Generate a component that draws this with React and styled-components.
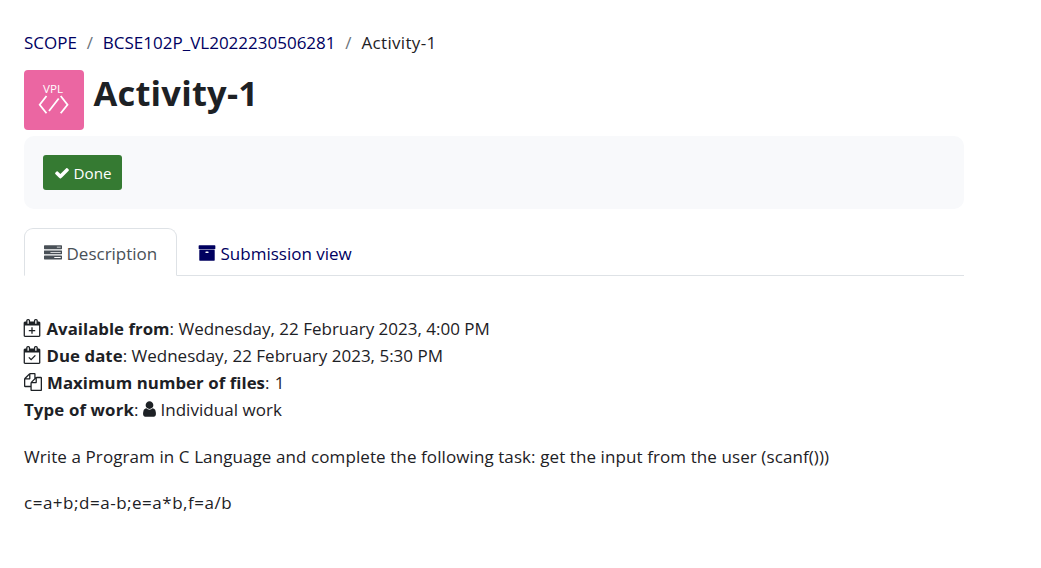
import React from "react";
import styled, { createGlobalStyle } from "styled-components";

const GlobalStyle = createGlobalStyle`
  * { box-sizing: border-box; }
  body {
    margin: 0;
    background: #fff;
    color: #1d2125;
    font-family: "Segoe UI", "Open Sans", "Noto Sans", sans-serif;
    font-size: 17px;
    line-height: 27px;
  }
`;

const Page = styled.main`
  width: 964px;
  padding: 29px 0 0 24px;
`;

const Text = styled.span`
  letter-spacing: ${(p) => p.$track || 0}px;
  white-space: pre;
`;

const Breadcrumb = styled.nav`
  display: flex;
  height: 27px;
`;

const Crumb = styled(Text)`
  color: ${(p) => (p.$link ? "#00005f" : "#1d2125")};
`;

const Separator = styled.span`
  padding: 0 10px 0 9.7px;
  color: #6a737b;
`;

const Header = styled.header`
  display: flex;
  margin-top: 14px;
`;

const ActivityIcon = styled.div`
  width: 60px;
  height: 60px;
  border-radius: 4px;
  background: #eb66a2;
`;

const Title = styled.h1`
  margin: 0 0 0 9.5px;
  font-size: 34.5px;
  line-height: 46px;
  font-weight: 700;
  letter-spacing: 0.2px;
`;

const Panel = styled.section`
  height: 73px;
  margin-top: 6px;
  padding: 19px;
  border-radius: 10px;
  background: #f8f9fb;
`;

const DoneBadge = styled.div`
  display: inline-flex;
  align-items: center;
  gap: 4px;
  width: 79px;
  height: 35px;
  padding: 1px 0 0 10.5px;
  border-radius: 3px;
  background: #357a32;
  color: #fff;
  font-size: 15.2px;
`;

const Tabs = styled.nav`
  display: flex;
  height: 48px;
  margin-top: 19px;
  border-bottom: 1px solid #dee2e6;
`;

const Tab = styled.div`
  display: flex;
  align-items: center;
  height: 48px;
  gap: 5px;
  width: ${(p) => p.$width}px;
  padding: 2px 0 0 ${(p) => (p.$active ? 18.5 : 19.5)}px;
  border: 1px solid ${(p) => (p.$active ? "#dee2e6" : "transparent")};
  border-bottom-color: ${(p) => (p.$active ? "#fff" : "transparent")};
  border-radius: 9px 9px 0 0;
  color: ${(p) => (p.$active ? "#495057" : "#00005f")};
`;

const Details = styled.section`
  margin-top: 39px;
`;

const Row = styled.div`
  display: flex;
  align-items: center;
  height: 27px;
`;

const IconSlot = styled.span`
  display: flex;
  margin: 0 ${(p) => p.$after}px 1px ${(p) => p.$before}px;
`;

const Bold = styled(Text)`
  font-size: 16.8px;
  font-weight: 700;
`;

const Paragraph = styled.p`
  margin: ${(p) => p.$top}px 0 0;
`;

const icons = {
  check:
    "M1671 566q0 40-28 68l-724 724-136 136q-28 28-68 28t-68-28l-136-136-362-362q-28-28-28-68t28-68l136-136q28-28 68-28t68 28l294 295 656-657q28-28 68-28t68 28l136 136q28 28 28 68z",
  tasks:
    "M1024 1384h640v-80h-640v80zm-384-512h1024v-80h-1024v80zm640-512h384v-80h-384v80zm512 856v256q0 26-19 45t-45 19h-1664q-26 0-45-19t-19-45v-256q0-26 19-45t45-19h1664q26 0 45 19t19 45zm0-512v256q0 26-19 45t-45 19h-1664q-26 0-45-19t-19-45v-256q0-26 19-45t45-19h1664q26 0 45 19t19 45zm0-512v256q0 26-19 45t-45 19h-1664q-26 0-45-19t-19-45v-256q0-26 19-45t45-19h1664q26 0 45 19t19 45z",
  archive:
    "M1058 822q0-26-19-45t-45-19h-196q-26 0-45 19t-19 45 19 45 45 19h196q26 0 45-19t19-45zm606-182v960q0 26-19 45t-45 19h-1408q-26 0-45-19t-19-45v-960q0-26 19-45t45-19h1408q26 0 45 19t19 45zm64-448v256q0 26-19 45t-45 19h-1536q-26 0-45-19t-19-45v-256q0-26 19-45t45-19h1536q26 0 45 19t19 45z",
  calendar:
    "M192 1664h1408v-1024h-1408v1024zm384-1216v-288q0-14-9-23t-23-9h-64q-14 0-23 9t-9 23v288q0 14 9 23t23 9h64q14 0 23-9t9-23zm768 0v-288q0-14-9-23t-23-9h-64q-14 0-23 9t-9 23v288q0 14 9 23t23 9h64q14 0 23-9t9-23zm384-64v1280q0 52-38 90t-90 38h-1408q-52 0-90-38t-38-90v-1280q0-52 38-90t90-38h128v-96q0-66 47-113t113-47h64q66 0 113 47t47 113v96h384v-96q0-66 47-113t113-47h64q66 0 113 47t47 113v96h128q52 0 90 38t38 90z",
  plus: "M832 832h128v256h256v128h-256v256h-128v-256h-256v-128h256z",
  tick: "M810 1450l-275-275 92-92 183 183 375-375 92 92z",
  files:
    "M1696 384q40 0 68 28t28 68v1216q0 40-28 68t-68 28h-960q-40 0-68-28t-28-68v-288h-544q-40 0-68-28t-28-68v-672q0-40 20-88t48-76l408-408q28-28 76-48t88-20h416q40 0 68 28t28 68v328q68-40 128-40h416zm-544 213l-299 299h299v-299zm-640-384l-299 299h299v-299zm196 647l316-316v-416h-384v416q0 40-28 68t-68 28h-416v640h512v-256q0-40 20-88t48-76zm956 804v-1152h-384v416q0 40-28 68t-68 28h-416v640h896z",
  user: "M1536 1399q0 109-62.5 187t-150.5 78h-854q-88 0-150.5-78t-62.5-187q0-85 8.5-160.5t31.5-152 58.5-131 94-89 134.5-34.5q131 128 313 128t313-128q76 0 134.5 34.5t94 89 58.5 131 31.5 152 8.5 160.5zm-256-887q0 159-112.5 271.5t-271.5 112.5-271.5-112.5-112.5-271.5 112.5-271.5 271.5-112.5 271.5 112.5 112.5 271.5z",
};

function Icon({ names, size = 18, box = "0 0 1792 1792", width = size }) {
  return (
    <svg width={width} height={size} viewBox={box} fill="currentColor">
      {names.map((n) => (
        <path key={n} d={icons[n]} />
      ))}
    </svg>
  );
}

const LogoLabel = styled.text`
  font-size: 10.5px;
`;

function VplLogo() {
  return (
    <svg width="60" height="60" viewBox="0 0 60 60">
      <LogoLabel x="19" y="23" fill="#fff" textLength="20" lengthAdjust="spacingAndGlyphs">
        VPL
      </LogoLabel>
      <path
        d="M22.5 26L15.7 34.7L22.5 43.3M36.7 26L43.5 34.7L36.7 43.3M34.7 28.5L25 41"
        fill="none"
        stroke="#fff"
        strokeWidth="1.8"
      />
    </svg>
  );
}

export default function App() {
  return (
    <Page>
      <GlobalStyle />
      <Breadcrumb>
        <Crumb $link>SCOPE</Crumb>
        <Separator>/</Separator>
        <Crumb $link>BCSE102P_VL2022230506281</Crumb>
        <Separator>/</Separator>
        <Crumb $track={0.33}>Activity-1</Crumb>
      </Breadcrumb>
      <Header>
        <ActivityIcon>
          <VplLogo />
        </ActivityIcon>
        <Title>Activity-1</Title>
      </Header>
      <Panel>
        <DoneBadge>
          <Icon names={["check"]} size={16} />
          <Text>Done</Text>
        </DoneBadge>
      </Panel>
      <Tabs>
        <Tab $active $width={153}>
          <Icon names={["tasks"]} />
          <Text>Description</Text>
        </Tab>
        <Tab $width={193}>
          <Icon names={["archive"]} />
          <Text>Submission view</Text>
        </Tab>
      </Tabs>
      <Details>
        <Row>
          <IconSlot $before={-1} $after={5.5}>
            <Icon names={["calendar", "plus"]} />
          </IconSlot>
          <Bold $track={0.03}>Available from</Bold>
          <Text>: Wednesday, 22 February 2023, 4:00 PM</Text>
        </Row>
        <Row>
          <IconSlot $before={-1} $after={5.5}>
            <Icon names={["calendar", "tick"]} />
          </IconSlot>
          <Bold $track={0.06}>Due date</Bold>
          <Text>: Wednesday, 22 February 2023, 5:30 PM</Text>
        </Row>
        <Row>
          <IconSlot $before={-0.5} $after={5.5}>
            <Icon names={["files"]} />
          </IconSlot>
          <Bold $track={0.07}>Maximum number of files</Bold>
          <Text $track={0.4}>: 1</Text>
        </Row>
        <Row>
          <Bold $track={0.15}>Type of work</Bold>
          <Text>: </Text>
          <IconSlot $before={0} $after={4.5}>
            <Icon names={["user"]} width={13} box="256 0 1280 1792" />
          </IconSlot>
          <Text $track={0.05}>Individual work</Text>
        </Row>
        <Paragraph $top={20}>
          <Text $track={0.09}>
            Write a Program in C Language and complete the following task: get the input from the user (scanf()))
          </Text>
        </Paragraph>
        <Paragraph $top={19}>
          <Text $track={0.52}>c=a+b;d=a-b;e=a*b,f=a/b</Text>
        </Paragraph>
      </Details>
    </Page>
  );
}
